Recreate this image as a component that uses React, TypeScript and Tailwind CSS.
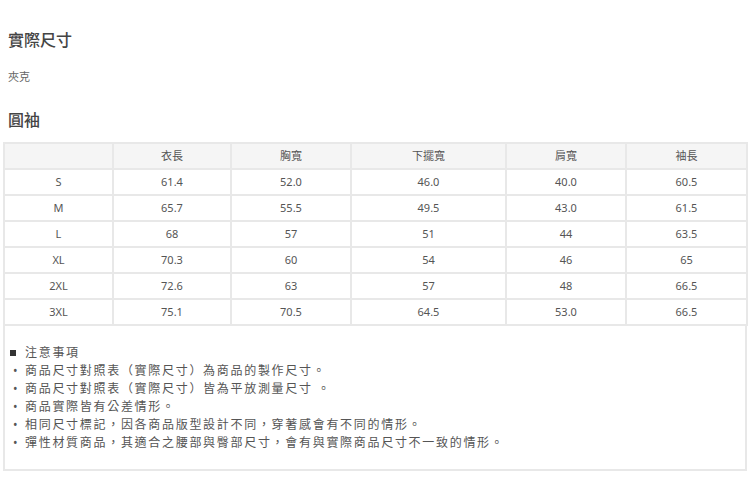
const HEADERS = ["", "衣長", "胸寬", "下擺寬", "肩寬", "袖長"];

const ROWS = [
  ["S", "61.4", "52.0", "46.0", "40.0", "60.5"],
  ["M", "65.7", "55.5", "49.5", "43.0", "61.5"],
  ["L", "68", "57", "51", "44", "63.5"],
  ["XL", "70.3", "60", "54", "46", "65"],
  ["2XL", "72.6", "63", "57", "48", "66.5"],
  ["3XL", "75.1", "70.5", "64.5", "53.0", "66.5"],
];

const COL_WIDTHS = ["w-[109px]", "w-[118px]", "w-[120px]", "w-[155px]", "w-[120px]", "w-[121px]"];

const NOTES = [
  "商品尺寸對照表（實際尺寸）為商品的製作尺寸。",
  "商品尺寸對照表（實際尺寸）皆為平放測量尺寸 。",
  "商品實際皆有公差情形。",
  "相同尺寸標記，因各商品版型設計不同，穿著感會有不同的情形。",
  "彈性材質商品，其適合之腰部與臀部尺寸，會有與實際商品尺寸不一致的情形。",
];

export default function App() {
  return (
    <div
      className="w-[750px] h-[500px] bg-white text-[#555] overflow-hidden"
      style={{ fontFamily: '"Noto Sans", "Noto Sans CJK TC", sans-serif' }}
    >
      <div className="pl-[8px] pt-[30px]">
        <h2 className="text-[16px] leading-[20px] font-medium text-[#444]">實際尺寸</h2>
        <p className="mt-[20px] text-[11px] leading-[14px] text-[#666]">夾克</p>
        <h3 className="mt-[26px] text-[16px] leading-[20px] font-medium text-[#444]">圓袖</h3>
      </div>

      <div className="ml-[3px] mt-[12px] w-[744px]">
        <table className="w-full table-fixed border-collapse text-[11px] text-[#555]">
          <colgroup>
            {COL_WIDTHS.map((w, i) => (
              <col key={i} className={w} />
            ))}
          </colgroup>
          <thead>
            <tr className="h-[26px] bg-[#f5f5f5]">
              {HEADERS.map((h, i) => (
                <th key={i} className="border-2 border-[#e8e8e8] font-normal text-center p-0">
                  {h}
                </th>
              ))}
            </tr>
          </thead>
          <tbody>
            {ROWS.map((row) => (
              <tr key={row[0]} className="h-[26px]">
                {row.map((cell, i) => (
                  <td key={i} className="border-2 border-[#e8e8e8] text-center p-0">
                    {cell}
                  </td>
                ))}
              </tr>
            ))}
          </tbody>
        </table>

        <div className="h-[145px] border-2 border-t-0 border-[#e8e8e8] pl-[2px] pt-[18px] text-[12px] leading-[18px] tracking-[1.7px] text-[#555]">
          <div className="flex items-center">
            <span className="inline-block w-[6px] h-[6px] bg-[#333] ml-[3px] mr-[9px]" />
            <span>注意事項</span>
          </div>
          {NOTES.map((n, i) => (
            <div key={i} className="flex">
              <span className="w-[18px] text-center">•</span>
              <span>{n}</span>
            </div>
          ))}
        </div>
      </div>
    </div>
  );
}
